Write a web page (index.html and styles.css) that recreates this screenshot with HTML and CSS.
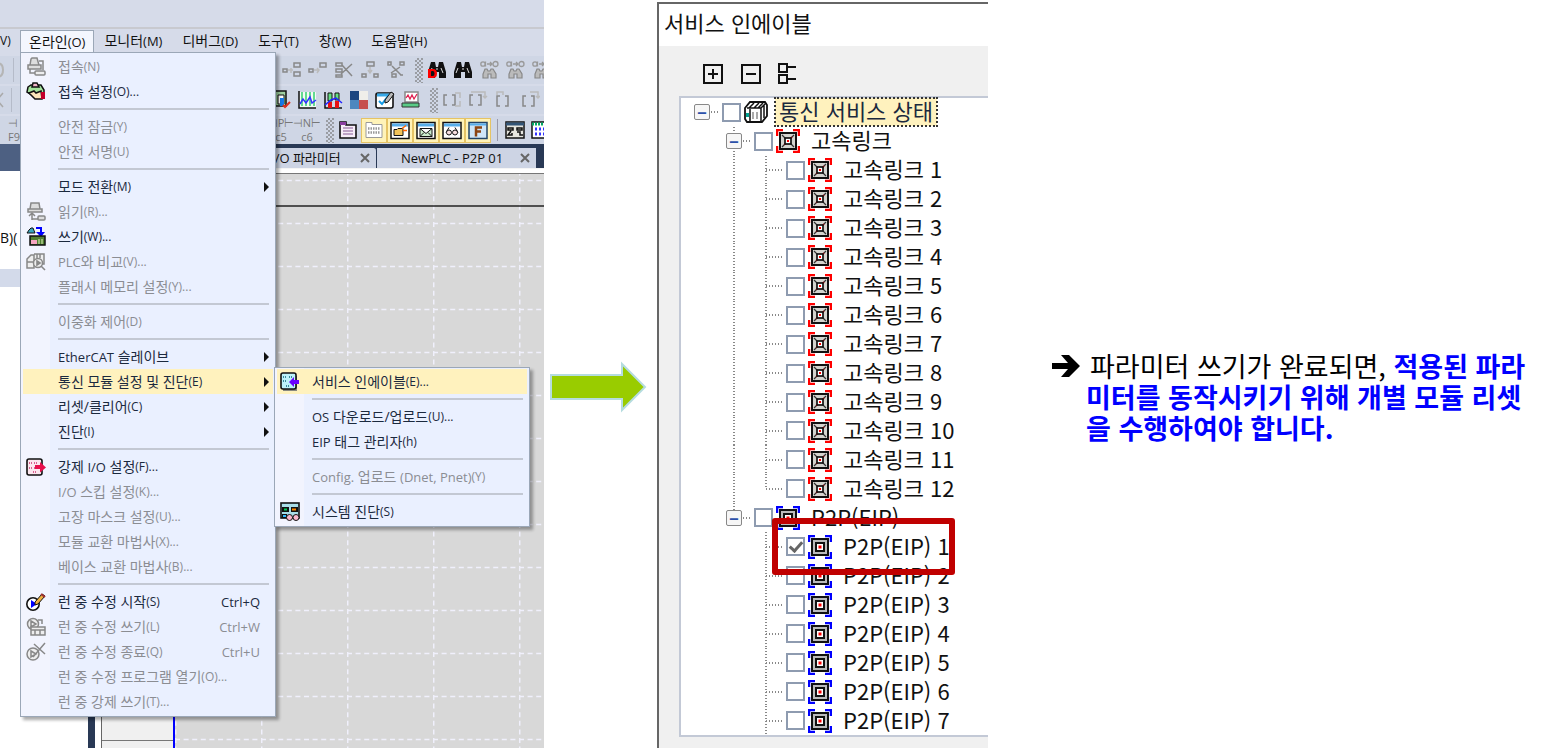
FILE: index.html
```html
<!DOCTYPE html>
<html lang="ko">
<head>
<meta charset="utf-8">
<title>서비스 인에이블</title>
<link rel="stylesheet" href="styles.css">
</head>
<body>
<svg class="sprite" aria-hidden="true">
  <symbol id="link" viewBox="0 0 24 24"><path d="M1 7V1h6M17 1h6v6M23 17v6h-6M7 23H1v-6" fill="none" stroke="#f00" stroke-width="2.5"/><rect x="4" y="4" width="16" height="16" fill="#d4d4cf" stroke="#111" stroke-width="2"/><path d="M6 6l12 12M18 6L6 18" stroke="#333" stroke-width="1.2"/><path d="M16 8l-8 8" stroke="#f00" stroke-width="1.5" stroke-dasharray="2 7"/><rect x="9" y="9" width="6" height="6" fill="#fff" stroke="#111" stroke-width="1.7"/><rect x="11" y="11" width="2" height="2" fill="#f00"/></symbol>
  <symbol id="p2p" viewBox="0 0 24 24"><path d="M1 7V1h6M17 1h6v6M23 17v6h-6M7 23H1v-6" fill="none" stroke="#00f" stroke-width="2.5"/><rect x="4" y="4" width="16" height="16" fill="#bbb" stroke="#111" stroke-width="2"/><rect x="8" y="8" width="8" height="8" fill="#fff" stroke="#111" stroke-width="2"/><rect x="10.500" y="10.500" width="3" height="3" fill="#f00"/></symbol>
  <symbol id="rack" viewBox="0 0 24 24"><path d="M1 8l5-6h15l2 3v11l-5 6H3l-2-3z" fill="#fff" stroke="#111" stroke-width="1.800"/><path d="M3 8h14v13M17 8l5-5M5 8l5-5M10 8l5-5M14 8l5-5M6 9v12M20 5v13" fill="none" stroke="#111" stroke-width="1.500"/><path d="M9 12v7M13 12v7" stroke="#aaa" stroke-width="2"/><path d="M2 13h3v4H2z" fill="#00a090"/></symbol>
  <symbol id="plug" viewBox="0 0 20 20"><path d="M5 2l1-1h5l2 7H4zM2 8h13v4H2z" fill="#ddd" stroke="#888" stroke-width="1.500"/><path d="M4 12v4h5M13 4h4v9" fill="none" stroke="#888" stroke-width="1.500"/><rect x="9" y="14" width="10" height="4" rx="1" fill="#eee" stroke="#888" stroke-width="1.500"/></symbol>
  <symbol id="setup" viewBox="0 0 20 20"><path d="M2 5l3-2h10l3 5v6H8L1 10z" fill="#a5e49c" stroke="#111" stroke-width="1.500"/><path d="M6 5l1-4h4l2 4z" fill="#f5b5cb" stroke="#111" stroke-width="1.500"/><path d="M3 11l5-2 2 2 5-2 1 8H9z" fill="#fde6bc" stroke="#111" stroke-width="1.500"/><path d="M15 10h4v7h-4z" fill="#c4002a"/></symbol>
  <symbol id="read" viewBox="0 0 20 20"><path d="M5 1h8l1 6H4zM2 7h14v3H2z" fill="#ddd" stroke="#888" stroke-width="1.500"/><path d="M6 18v-6M3 14l3-3 3 3M6 17h6" fill="none" stroke="#888" stroke-width="1.500"/><rect x="12" y="14" width="7" height="4" rx="1" fill="#ddd" stroke="#888" stroke-width="1.500"/></symbol>
  <symbol id="write" viewBox="0 0 20 20"><path d="M3 3l2-2h2l2 5H1z" fill="#38a8c0" stroke="#111"/><path d="M10 1h5v6" fill="none" stroke="#00f" stroke-width="2"/><path d="M10 5h9l-4 5z" fill="#00f"/><path d="M4 9h15v9H4z" fill="#518032" stroke="#111" stroke-width="1.500"/><path d="M5 13h6v4H5z" fill="#f6a5c0"/><path d="M13 12v5M16 12v5" stroke="#e5f6ba"/></symbol>
  <symbol id="compare" viewBox="0 0 20 20"><path d="M1 7l4-4h3v13H1zM8 2h10v10H8M11 2v4M14 2v4M1 10h6" fill="#eee" stroke="#888" stroke-width="1.500"/><circle cx="12" cy="11" r="4.500" fill="#eee" stroke="#888" stroke-width="1.500"/><path d="M11 9l3 2-3 2zM15 14l4 4" fill="#888" stroke="#888" stroke-width="1.600"/></symbol>
  <symbol id="force" viewBox="0 0 20 20"><rect x="1" y="2" width="15" height="16" rx="2" fill="#fce6ee" stroke="#111" stroke-width="1.600"/><path d="M3 6h3m2 0h3M3 11h3m2 0h2M7 15h3" stroke="#d86090" stroke-width="2" stroke-dasharray="1 1"/><path d="M9 8h5V5l6 5.500-6 5V12H9z" fill="#e8104c"/></symbol>
  <symbol id="edit" viewBox="0 0 20 20"><circle cx="7" cy="12" r="6.200" fill="#fff" stroke="#111" stroke-width="1.600"/><path d="M5 8l6 4-6 4z" fill="#00f"/><path d="M9 10l7-8 3 2-7 8-3 1z" fill="#f0b040" stroke="#111"/><path d="M15 2l4 3" stroke="#a03030" stroke-width="2"/></symbol>
  <symbol id="editwrite" viewBox="0 0 20 20"><circle cx="7" cy="7" r="5.500" fill="#eee" stroke="#888" stroke-width="1.500"/><path d="M5 4l5 3-5 3zM12 3h4v4" fill="none" stroke="#888" stroke-width="1.500"/><path d="M5 10h14v8H5zM5 13h14M9 13v5M14 13v5" fill="#eee" stroke="#888" stroke-width="1.500"/></symbol>
  <symbol id="editend" viewBox="0 0 20 20"><circle cx="7" cy="12" r="6" fill="#eee" stroke="#888" stroke-width="1.500"/><path d="M5 9l5 3-5 3zM8 2l11 10M19 1L7 15" fill="none" stroke="#888" stroke-width="1.500"/></symbol>
  <symbol id="enable" viewBox="0 0 20 20"><path d="M3 4h14v15H3z" fill="#8a8a80"/><rect x="1" y="1" width="15" height="16" rx="2" fill="#bdf2fa" stroke="#111" stroke-width="1.600"/><path d="M3 5h4m2 0h4M3 9h4M6 14h4" stroke="#3a8a9a" stroke-width="2" stroke-dasharray="1 1"/><path d="M9 10l5-5v3h5v4h-5v3z" fill="#6a00ff"/></symbol>
  <symbol id="diag" viewBox="0 0 20 20"><rect x="1" y="1" width="18" height="15" fill="#a9dde8" stroke="#111" stroke-width="1.600"/><path d="M2 5h7v5H2zM11 5h7v5h-7zM2 12h5v4H2z" fill="#111"/><path d="M4 7.500h3" stroke="#0c5" stroke-width="2"/><path d="M12 7.500h4" stroke="#f80" stroke-width="2"/><path d="M3 14h3" stroke="#3bf" stroke-width="2"/><circle cx="9.500" cy="15.500" r="3" fill="#fbb8cd" stroke="#111"/><circle cx="16" cy="15.500" r="3" fill="#fbb8cd" stroke="#111"/></symbol>
  <symbol id="net1" viewBox="0 0 20 20"><path d="M1 9h4v3H1zM12 3h6v4h-6zM12 12h6v4h-6z" fill="none" stroke="#888" stroke-width="1.500"/><path d="M6 10h5M9 8v5" stroke="#bbb" stroke-width="1.500"/></symbol>
  <symbol id="net2" viewBox="0 0 20 20"><path d="M1 9h4v3H1zM12 3h6v4h-6z" fill="none" stroke="#888" stroke-width="1.500"/><path d="M6 10h5M9 8l2 2-2 3" fill="none" stroke="#bbb" stroke-width="1.500"/></symbol>
  <symbol id="net3" viewBox="0 0 20 20"><path d="M2 3h6v3H2zM2 9h6v3H2zM2 15h6v2H2zM18 4L7 14M8 5l10 11" fill="none" stroke="#888" stroke-width="1.500"/></symbol>
  <symbol id="net4" viewBox="0 0 20 20"><path d="M7 2h7v4H7zM2 14h4v3H2zM14 14h4v3h-4z" fill="none" stroke="#888" stroke-width="1.500"/><path d="M10 7v6M8 10l2 3 2-3" fill="none" stroke="#bbb" stroke-width="1.500"/></symbol>
  <symbol id="net5" viewBox="0 0 20 20"><path d="M2 2h3v3H2zM14 2h4v3h-4zM6 14h4v3H6zM6 6l9 9M14 7L5 13M14 15h3" fill="none" stroke="#888" stroke-width="1.500"/></symbol>
  <symbol id="bino" viewBox="0 0 20 20"><path d="M4 2h4l1 5h2l1-5h4l3 10v6h-7v-6H8v6H1v-6z" fill="#111"/><path d="M5 8l-2 5M14 8l2 5M9 9h2" stroke="#ddd"/></symbol>
  <symbol id="bino-d" viewBox="0 0 20 20"><use href="#bino"/><path d="M1 9h5q4 0 4 4.500T6 18H1zM4 11v5h2q1.500 0 1.500-2.500T6 11z" fill="#f00" fill-rule="evenodd"/></symbol>
  <symbol id="bino-g" viewBox="0 0 20 20"><g fill="none" stroke="#999" stroke-width="1.300"><circle cx="4" cy="4" r="2.200"/><path d="M6.500 1.500v5"/><circle cx="16.500" cy="4" r="2.500"/><path d="M8 4h5M11 2l2 2-2 2"/></g><path d="M6 9h2l1 2h2l1-2h2l3 5v4h-5v-4H9v4H4v-4z" fill="#bbb" stroke="#888" stroke-width="1.200"/></symbol>
  <symbol id="door" viewBox="0 0 20 20"><path d="M2 3l3-2h10v15H5l-3 2z" fill="#9fd0a0" stroke="#111" stroke-width="1.500"/><path d="M7 5h6v9H7z" fill="#fff" stroke="#111"/><path d="M9 8h4v8H9z" fill="#1678e8"/><path d="M12 15l2 2 5-5" fill="none" stroke="#e03020" stroke-width="2"/></symbol>
  <symbol id="trend" viewBox="0 0 20 20"><path d="M2 2h17v16H2z" fill="#f2fbf4"/><path d="M2 1v17h17" fill="none" stroke="#111" stroke-width="1.500"/><path d="M5 2v14M9 2v14M13 2v14M17 2v14" stroke="#35d070" stroke-width="1.500"/><path d="M3 14l3-5 3 4 4-6 2 6 4-3" fill="none" stroke="#33f" stroke-width="1.500"/></symbol>
  <symbol id="bars" viewBox="0 0 20 20"><path d="M2 2v16h17" fill="none" stroke="#111" stroke-width="1.500"/><path d="M5 3h4v8H5zM12 3h4v7h-4z" fill="#65df80" stroke="#111"/><path d="M5 12h4v6H5zM12 11h4v7h-4z" fill="#e81010"/><path d="M2 15l6-5 5-2 6 5" fill="none" stroke="#22f" stroke-width="1.500"/></symbol>
  <symbol id="quad" viewBox="0 0 20 20"><path d="M1 1h9v9H1z" fill="#1c4680"/><path d="M10 1h9v9h-9z" fill="#efeeea"/><path d="M1 10h9v9H1z" fill="#4d87bf"/><path d="M10 10h9v9h-9z" fill="#c64e4d"/></symbol>
  <symbol id="memo" viewBox="0 0 20 20"><rect x="1" y="3" width="17" height="15" rx="2" fill="#fff" stroke="#111" stroke-width="1.600"/><path d="M2 5h14" stroke="#36a8e8" stroke-width="3"/><path d="M4 11l3 3 6-8" fill="none" stroke="#149be6" stroke-width="2"/><path d="M10 10l6-8 3 2-6 8-3 1z" fill="#bbb" stroke="#111"/></symbol>
  <symbol id="monitor" viewBox="0 0 20 20"><path d="M4 2h13v10H4z" fill="#fff" stroke="#888" stroke-width="1.500"/><path d="M5 8l2-3 2 4 2-4 2 4 3-5" fill="none" stroke="#e02050" stroke-width="1.300"/><path d="M1 13h17v4H1z" fill="#59cb86" stroke="#333"/></symbol>
  <symbol id="brk1" viewBox="0 0 20 20"><path d="M5 5H2v10h3M10 5h3v10h-3" fill="none" stroke="#888" stroke-width="1.500"/><path d="M13 3h5v5M13 16h5v-5" fill="none" stroke="#bbb" stroke-width="1.500"/></symbol>
  <symbol id="brk2" viewBox="0 0 20 20"><path d="M5 5H2v10h3M10 5h3v10h-3" fill="none" stroke="#888" stroke-width="1.500"/><path d="M3 2h14v6M15 6l2 2 2-2" fill="none" stroke="#bbb" stroke-width="1.500"/></symbol>
  <symbol id="brk3" viewBox="0 0 20 20"><path d="M6 6H3v10h3M11 6h3v10h-3" fill="none" stroke="#888" stroke-width="1.500"/><path d="M3 5V2h6v3" fill="none" stroke="#bbb" stroke-width="1.500"/></symbol>
  <symbol id="brk4" viewBox="0 0 20 20"><path d="M6 6H3v10h3M11 6h3v10h-3" fill="none" stroke="#888" stroke-width="1.500"/><path d="M10 2h8v6M16 6l2 2 2-2" fill="none" stroke="#bbb" stroke-width="1.500"/></symbol>
  <symbol id="note" viewBox="0 0 20 20"><path d="M2 2h6v3h10v13H2z" fill="#f7eef8" stroke="#111" stroke-width="1.600"/><path d="M2 2h6v3H2z" fill="#8a3fa0"/><path d="M5 8h10M5 11h10M5 14h10" stroke="#875a95"/></symbol>
  <symbol id="cells" viewBox="0 0 20 20"><path d="M2 2h6v2h10v13H2z" fill="#fff" stroke="#999"/><path d="M4 8h12M4 12h12" stroke="#999" stroke-width="2.500" stroke-dasharray="1.500 1"/></symbol>
  <symbol id="folder" viewBox="0 0 20 20"><rect x="1" y="2" width="18" height="16" fill="#fff" stroke="#111" stroke-width="1.500"/><path d="M2 3h16v3H2z" fill="#57aeea"/><path d="M4 9h3l1-1h5v7H4z" fill="#f2c35a" stroke="#111"/><path d="M12 8l4-3M13 10h4" stroke="#f60" stroke-width="1.500"/></symbol>
  <symbol id="mail" viewBox="0 0 20 20"><rect x="1" y="2" width="18" height="16" fill="#fff" stroke="#111" stroke-width="1.500"/><path d="M2 3h16v3H2z" fill="#57aeea"/><path d="M4 8h12v8H4zM4 8l6 5 6-5M4 16l4-4M16 16l-4-4" fill="#ccebcd" stroke="#111"/></symbol>
  <symbol id="glasses" viewBox="0 0 20 20"><rect x="1" y="2" width="18" height="16" fill="#fff" stroke="#111" stroke-width="1.500"/><path d="M2 3h16v3H2z" fill="#57aeea"/><path d="M4 12l3-5M16 12l-3-5" stroke="#111"/><circle cx="7" cy="12" r="2.500" fill="#f8dfdf" stroke="#111"/><circle cx="13" cy="12" r="2.500" fill="#f8dfdf" stroke="#111"/></symbol>
  <symbol id="eff" viewBox="0 0 20 20"><rect x="1" y="2" width="18" height="16" fill="#cfe6f8" stroke="#246" stroke-width="1.500"/><path d="M2 3h16v2H2z" fill="#57aeea"/><path d="M8 16V7h6M8 11h5" fill="none" stroke="#8b4513" stroke-width="2.500"/></symbol>
  <symbol id="win" viewBox="0 0 20 20"><rect x="1" y="2" width="18" height="16" fill="#e6e6df" stroke="#111" stroke-width="1.500"/><path d="M1 4h18" stroke="#357" stroke-width="3"/><path d="M3 8h5v2H3zM12 8h5v2h-5zM6 11l-3 4h4v-2M12 12h3v3h3" fill="none" stroke="#111" stroke-width="1.500"/></symbol>
  <symbol id="grid" viewBox="0 0 20 20"><rect x="1" y="2" width="18" height="16" fill="#fff" stroke="#111" stroke-width="1.500"/><path d="M1 4h18" stroke="#0a6" stroke-width="3" stroke-dasharray="2 1"/><path d="M4 9h12M4 14h12" stroke="#33f" stroke-width="3" stroke-dasharray="2 2"/></symbol>
</svg>

<main class="page">
  <section class="ide">
    <div class="titlebar"></div>
    <nav class="menubar">
      <button class="clip">V)</button>
      <button class="open">온라인<span class="key">(O)</span></button>
      <button>모니터<span class="key">(M)</span></button>
      <button>디버그<span class="key">(D)</span></button>
      <button>도구<span class="key">(T)</span></button>
      <button>창<span class="key">(W)</span></button>
      <button>도움말<span class="key">(H)</span></button>
    </nav>
    <div class="toolbar">
      <span class="lead"><svg class="edge" viewBox="0 0 20 28"><path d="M-3 7q6 0 6 7t-6 7" fill="none" stroke="#b5b5b5" stroke-width="2"/><path d="M13.500 2v24" stroke="#b5bbc9"/></svg></span><span class="slot"></span>
      <svg><use href="#net1"/></svg><svg><use href="#net2"/></svg><svg><use href="#net3"/></svg><svg><use href="#net4"/></svg><svg><use href="#net5"/></svg>
      <i class="grip"></i>
      <svg><use href="#bino-d"/></svg><svg><use href="#bino"/></svg><svg><use href="#bino-g"/></svg><svg><use href="#bino-g"/></svg><svg><use href="#bino-g"/></svg>
    </div>
    <div class="toolbar">
      <span class="lead"><svg class="edge" viewBox="0 0 20 28"><path d="M3 7l-6 7 6 7" fill="none" stroke="#aaa" stroke-width="1.500"/><path d="M11.500 2v24" stroke="#b5bbc9"/></svg></span>
      <svg><use href="#door"/></svg><svg><use href="#trend"/></svg><svg><use href="#bars"/></svg><svg><use href="#quad"/></svg><svg><use href="#memo"/></svg><svg><use href="#monitor"/></svg>
      <i class="grip"></i>
      <svg><use href="#brk1"/></svg><svg><use href="#brk2"/></svg><svg><use href="#brk3"/></svg><svg><use href="#brk4"/></svg>
    </div>
    <div class="toolbar">
      <span class="lead"><span class="fkey"><span>⊣</span><span>F9</span></span></span>
      <span class="fn"><span>⊣P⊢</span><span>c5</span></span><span class="fn"><span>⊣N⊢</span><span>c6</span></span>
      <i class="grip"></i>
      <svg><use href="#note"/></svg><svg class="on"><use href="#cells"/></svg><svg class="on"><use href="#folder"/></svg><svg class="on"><use href="#mail"/></svg><svg class="on"><use href="#glasses"/></svg><svg class="on"><use href="#eff"/></svg>
      <i class="bar"></i>
      <svg><use href="#win"/></svg><svg><use href="#grid"/></svg>
    </div>
    <div class="work">
      <aside class="side">
        <div class="side-head"></div>
        <p class="side-text">B)(</p>
        <div class="side-band"></div>
      </aside>
      <div class="editor">
        <div class="tabs">
          <div class="tab first"><span>I/O 파라미터</span><button class="close" aria-label="닫기"><svg viewBox="0 0 10 10"><path d="M1 1l8 8M9 1L1 9"/></svg></button></div>
          <div class="tab"><span>NewPLC - P2P 01</span><button class="close" aria-label="닫기"><svg viewBox="0 0 10 10"><path d="M1 1l8 8M9 1L1 9"/></svg></button></div>
        </div>
        <div class="sheet">
          <div class="gutter"></div>
          <svg class="canvas"><defs><pattern id="cell" x="0" y="5" width="86" height="43" patternUnits="userSpaceOnUse"><path d="M0 1.500H86" stroke="#f0f0fc" stroke-width="1.500" stroke-dasharray="5 3.600"/><path d="M.7 0V43" stroke="#f0f0fc" stroke-width="1.500" stroke-dasharray="5 3.600"/></pattern></defs><rect width="100%" height="100%" fill="#d8d8d8"/><rect width="100%" height="100%" fill="url(#cell)"/><path d="M0 32h900" stroke="#222" stroke-width="1.500"/></svg>
        </div>
      </div>
    </div>

    <ul class="menu main-menu">
      <li><button disabled><svg><use href="#plug"/></svg>접속<span class="key">(N)</span></button></li>
      <li><button><svg><use href="#setup"/></svg>접속 설정<span class="key">(O)...</span></button></li>
      <li class="rule"></li>
      <li><button disabled><i></i>안전 잠금<span class="key">(Y)</span></button></li>
      <li><button disabled><i></i>안전 서명<span class="key">(U)</span></button></li>
      <li class="rule"></li>
      <li><button class="more"><i></i>모드 전환<span class="key">(M)</span></button></li>
      <li><button disabled><svg><use href="#read"/></svg>읽기<span class="key">(R)...</span></button></li>
      <li><button><svg><use href="#write"/></svg>쓰기<span class="key">(W)...</span></button></li>
      <li><button disabled><svg><use href="#compare"/></svg><span class="lat">PLC</span>와 비교<span class="key">(V)...</span></button></li>
      <li><button disabled><i></i>플래시 메모리 설정<span class="key">(Y)...</span></button></li>
      <li class="rule"></li>
      <li><button disabled><i></i>이중화 제어<span class="key">(D)</span></button></li>
      <li class="rule"></li>
      <li><button class="more"><i></i><span class="lat">EtherCAT</span> 슬레이브</button></li>
      <li class="parent"><button class="more hot"><i></i>통신 모듈 설정 및 진단<span class="key">(E)</span></button>
        <ul class="menu sub-menu">
          <li><button class="hot"><svg><use href="#enable"/></svg>서비스 인에이블<span class="key">(E)...</span></button></li>
          <li class="rule"></li>
          <li><button><i></i><span class="lat">OS</span> 다운로드/업로드<span class="key">(U)...</span></button></li>
          <li><button><i></i><span class="lat">EIP</span> 태그 관리자<span class="key">(h)</span></button></li>
          <li class="rule"></li>
          <li><button disabled><i></i><span class="lat">Config.</span> 업로드 <span class="lat">(Dnet, Pnet)</span><span class="key">(Y)</span></button></li>
          <li class="rule"></li>
          <li><button><svg><use href="#diag"/></svg>시스템 진단<span class="key">(S)</span></button></li>
        </ul>
      </li>
      <li><button class="more"><i></i>리셋/클리어<span class="key">(C)</span></button></li>
      <li><button class="more"><i></i>진단<span class="key">(I)</span></button></li>
      <li class="rule"></li>
      <li><button><svg><use href="#force"/></svg>강제 <span class="lat">I/O</span> 설정<span class="key">(F)...</span></button></li>
      <li><button disabled><i></i><span class="lat">I/O</span> 스킵 설정<span class="key">(K)...</span></button></li>
      <li><button disabled><i></i>고장 마스크 설정<span class="key">(U)...</span></button></li>
      <li><button disabled><i></i>모듈 교환 마법사<span class="key">(X)...</span></button></li>
      <li><button disabled><i></i>베이스 교환 마법사<span class="key">(B)...</span></button></li>
      <li class="rule"></li>
      <li><button><svg><use href="#edit"/></svg>런 중 수정 시작<span class="key">(S)</span><kbd>Ctrl+Q</kbd></button></li>
      <li><button disabled><svg><use href="#editwrite"/></svg>런 중 수정 쓰기<span class="key">(L)</span><kbd>Ctrl+W</kbd></button></li>
      <li><button disabled><svg><use href="#editend"/></svg>런 중 수정 종료<span class="key">(Q)</span><kbd>Ctrl+U</kbd></button></li>
      <li><button disabled><i></i>런 중 수정 프로그램 열기<span class="key">(O)...</span></button></li>
      <li><button disabled><i></i>런 중 강제 쓰기<span class="key">(T)...</span></button></li>
    </ul>
  </section>

  <div class="flow">
    <svg viewBox="0 0 98 52" width="98" height="52" aria-hidden="true"><path d="M2 14h71V3l23 23-23 23V38H2z" fill="#9c0" stroke="#b5dcdf" stroke-width="2"/></svg>
  </div>

  <section class="dialog">
    <h1>서비스 인에이블</h1>
    <div class="tools">
      <button aria-label="모두 펼치기"><svg viewBox="0 0 22 22"><path d="M2 2h18v18H2zM11 6v10M6 11h10"/></svg></button>
      <button aria-label="모두 접기"><svg viewBox="0 0 22 22"><path d="M2 2h18v18H2zM6 11h10"/></svg></button>
      <button aria-label="트리 보기"><svg viewBox="0 0 22 22"><path d="M1 1h8v8H1zM1 12h8v8H1zM9 4h9M9 16h9"/></svg></button>
    </div>
    <div class="tree">
      <div class="row root"><span class="node"><button>−</button></span><label><input type="checkbox"><svg><use href="#rack"/></svg><span>통신 서비스 상태</span></label></div>
      <div class="row"><i class="gap"></i><span class="node mid"><button>−</button></span><label><input type="checkbox"><svg><use href="#link"/></svg><span>고속링크</span></label></div>
      <div class="row"><i class="gap"></i><i class="gap line"></i><span class="node mid"></span><label><input type="checkbox"><svg><use href="#link"/></svg><span>고속링크 1</span></label></div>
      <div class="row"><i class="gap"></i><i class="gap line"></i><span class="node mid"></span><label><input type="checkbox"><svg><use href="#link"/></svg><span>고속링크 2</span></label></div>
      <div class="row"><i class="gap"></i><i class="gap line"></i><span class="node mid"></span><label><input type="checkbox"><svg><use href="#link"/></svg><span>고속링크 3</span></label></div>
      <div class="row"><i class="gap"></i><i class="gap line"></i><span class="node mid"></span><label><input type="checkbox"><svg><use href="#link"/></svg><span>고속링크 4</span></label></div>
      <div class="row"><i class="gap"></i><i class="gap line"></i><span class="node mid"></span><label><input type="checkbox"><svg><use href="#link"/></svg><span>고속링크 5</span></label></div>
      <div class="row"><i class="gap"></i><i class="gap line"></i><span class="node mid"></span><label><input type="checkbox"><svg><use href="#link"/></svg><span>고속링크 6</span></label></div>
      <div class="row"><i class="gap"></i><i class="gap line"></i><span class="node mid"></span><label><input type="checkbox"><svg><use href="#link"/></svg><span>고속링크 7</span></label></div>
      <div class="row"><i class="gap"></i><i class="gap line"></i><span class="node mid"></span><label><input type="checkbox"><svg><use href="#link"/></svg><span>고속링크 8</span></label></div>
      <div class="row"><i class="gap"></i><i class="gap line"></i><span class="node mid"></span><label><input type="checkbox"><svg><use href="#link"/></svg><span>고속링크 9</span></label></div>
      <div class="row"><i class="gap"></i><i class="gap line"></i><span class="node mid"></span><label><input type="checkbox"><svg><use href="#link"/></svg><span>고속링크 10</span></label></div>
      <div class="row"><i class="gap"></i><i class="gap line"></i><span class="node mid"></span><label><input type="checkbox"><svg><use href="#link"/></svg><span>고속링크 11</span></label></div>
      <div class="row"><i class="gap"></i><i class="gap line"></i><span class="node end"></span><label><input type="checkbox"><svg><use href="#link"/></svg><span>고속링크 12</span></label></div>
      <div class="row"><i class="gap"></i><span class="node end"><button>−</button></span><label><input type="checkbox"><svg><use href="#p2p"/></svg><span>P2P(EIP)</span></label></div>
      <div class="row marked"><i class="gap"></i><i class="gap"></i><span class="node mid"></span><label><input type="checkbox" checked><svg><use href="#p2p"/></svg><span>P2P(EIP) 1</span></label></div>
      <div class="row"><i class="gap"></i><i class="gap"></i><span class="node mid"></span><label><input type="checkbox"><svg><use href="#p2p"/></svg><span>P2P(EIP) 2</span></label></div>
      <div class="row"><i class="gap"></i><i class="gap"></i><span class="node mid"></span><label><input type="checkbox"><svg><use href="#p2p"/></svg><span>P2P(EIP) 3</span></label></div>
      <div class="row"><i class="gap"></i><i class="gap"></i><span class="node mid"></span><label><input type="checkbox"><svg><use href="#p2p"/></svg><span>P2P(EIP) 4</span></label></div>
      <div class="row"><i class="gap"></i><i class="gap"></i><span class="node mid"></span><label><input type="checkbox"><svg><use href="#p2p"/></svg><span>P2P(EIP) 5</span></label></div>
      <div class="row"><i class="gap"></i><i class="gap"></i><span class="node mid"></span><label><input type="checkbox"><svg><use href="#p2p"/></svg><span>P2P(EIP) 6</span></label></div>
      <div class="row"><i class="gap"></i><i class="gap"></i><span class="node mid"></span><label><input type="checkbox"><svg><use href="#p2p"/></svg><span>P2P(EIP) 7</span></label></div>
    </div>
  </section>

  <section class="note">
    <svg viewBox="0 0 28 24" width="28" height="24" aria-hidden="true"><path d="M0 9h16L9 1h8l11 11-11 11H9l7-8H0z"/></svg>
    <p>파라미터 쓰기가 완료되면, <strong>적용된 파라<br>미터를 동작시키기 위해 개별 모듈 리셋<br>을 수행하여야 합니다.</strong></p>
  </section>
</main>
</body>
</html>
```
FILE: styles.css
```css
*, ::before, ::after { box-sizing: border-box; }
body { margin: 0; background: #fff; color: #111; font-family: "Noto Sans CJK KR", sans-serif; }
button { margin: 0; padding: 0; border: 0; background: none; font: inherit; color: inherit; white-space: nowrap; }
ul { margin: 0; padding: 0; list-style: none; }
.sprite { display: none; }

.page { display: grid; grid-template-columns: 544fr 113fr 331fr 575fr; min-height: 100vh; overflow: hidden; }

/* IDE window */
.ide { position: relative; display: flex; flex-direction: column; min-width: 0; overflow: hidden; background: #d6dbe9; font-family: "Open Sans", "Noto Sans CJK KR", sans-serif; font-size: 14px; }
.titlebar { height: 29px; border-bottom: 2px solid #c8c9cf; }
.menubar { display: flex; height: 25px; padding-top: 1px; }
.menubar button { height: 22px; padding: 0 10px; line-height: 20px; flex: none; }
.menubar .clip { width: 20px; padding: 0; text-align: left; font-size: 12px; overflow: hidden; }
.menubar .open { padding: 0 8px; background: #f3f6fe; border: 1px solid #9ba7b7; border-bottom: 0; line-height: 19px; }
.key { font-size: 12px; }
.menubar .key { font-size: 13px; }
.lat { font-size: 13px; }

.toolbar { display: flex; align-items: center; height: 30px; border-top: 2px solid #d6dbe9; background: #cfd6e5; overflow: hidden; }
.toolbar svg { flex: none; width: 26px; height: 24px; padding: 2px 3px; }
.toolbar .lead { flex: none; display: flex; width: 268px; }
.toolbar .edge { width: 20px; height: 28px; padding: 0; }
.toolbar .slot { flex: none; width: 11px; }
.fkey, .fn { display: flex; flex-direction: column; flex: none; font-size: 11px; line-height: 14px; color: #777; }
.fkey { padding-left: 8px; }
.fn { width: 26px; align-items: center; }
.toolbar .on { height: 25px; background: #fff3b8; border: 1px solid #e5c365; padding: 1px 2px; }
.grip { flex: none; width: 8px; height: 25px; margin: 0 1px 0 6px; background: conic-gradient(#777 25%, transparent 0 50%, #777 0 75%, transparent 0) 0 0 / 4px 4px; opacity: .6; }
.bar { flex: none; width: 1px; height: 22px; margin: 0 4px 0 6px; background: #99a; }

.work { display: flex; flex: 1; min-height: 0; }
.side { flex: none; width: 88px; background: #fff; }
.side-head { height: 27px; background: #4d6082; }
.side-text { margin: 0; padding-top: 57px; height: 98px; font-size: 14px; line-height: 20px; }
.side-band { height: 18px; background: #d3daea; }
.editor { display: flex; flex-direction: column; flex: 1; min-width: 0; border-left: 7px solid #293955; background: #293955; }
.tabs { display: flex; height: 25px; padding-top: 4px; border-bottom: 1px solid #f5f5f5; }
.tab { display: flex; align-items: center; justify-content: space-between; width: 159px; padding: 0 5px 0 24px; background: #cdd4e4; line-height: 20px; font-size: 13px; }
.tab.first { width: 282px; padding-left: 176px; border-right: 1px solid #293955; border-radius: 0 3px 0 0; }
.close { display: flex; width: 11px; }
.close svg { width: 10px; height: 10px; stroke: #666; stroke-width: 2; }
.sheet { display: flex; flex: 1; border-top: 4px solid #fff; background: #fff; }
.gutter { flex: none; width: 74px; margin-left: 6px; background: linear-gradient(#777, #777) 0 calc(100% - 7px) / 100% 1px no-repeat #f0f0f0; border-left: 1px solid #666; border-right: 2px solid #00f; }
.canvas { flex: 1; min-width: 0; height: 100%; border-top: 1px solid #777; }

.menu { position: absolute; width: 256px; padding: 1px 2px 2px; border: 1px solid #9ba7b7; background: linear-gradient(90deg, #f2f4fe 29px, #eaf0ff 29px); box-shadow: 3px 3px 3px #0005; color: #1b293e; }
.main-menu { left: 20px; top: 52px; }
.sub-menu { left: 251px; top: -2px; }
.parent { position: relative; }
.menu button { display: flex; align-items: center; width: 100%; height: 25px; padding: 0 8px 0 3px; text-align: left; white-space: pre; line-height: 20px; }
.menu button:disabled { color: #8b8d93; }
.menu svg { flex: none; width: 20px; height: 20px; margin-right: 12px; }
.menu i { flex: none; width: 32px; }
.menu .hot { background: #fff2be; }
.menu .more::after { content: ""; margin-left: auto; margin-right: -4px; border: 5px solid transparent; border-left-color: #111; border-right: 0; }
.menu kbd { margin-left: auto; padding-right: 5px; font: 13px "Open Sans", sans-serif; }
.rule { height: 10px; margin: 0 4px 0 35px; border-top: 4px solid transparent; border-bottom: 4px solid transparent; background: #c3c8d3; background-clip: padding-box; }

/* Arrow between the two windows */
.flow { display: flex; justify-content: center; padding: 361px 5px 0 0; }

/* Dialog */
.dialog { display: flex; flex-direction: column; min-width: 0; margin-top: 2px; border: 2px solid #666; border-width: 2px 0 0 2px; background: #f0f0f0; overflow: hidden; }
.dialog h1 { margin: 0; padding-left: 5px; height: 42px; background: #fff; font-size: 22px; font-weight: 400; line-height: 36px; }
.tools { display: flex; gap: 16px; padding: 17px 0 0 43px; height: 50px; }
.tools button { width: 22px; height: 22px; }
.tools svg { width: 22px; height: 22px; fill: none; stroke: #111; stroke-width: 2; }
.tree { flex: 1; display: grid; grid-auto-rows: 1fr; margin: 0 0 11px 20px; padding-left: 5px; border: 2px solid #c3c9d6; border-right: 0; background: #fff; font-size: 22px; line-height: 28px; }
.row { position: relative; display: flex; min-height: 0; height: 100%; }
.row label { display: flex; align-items: center; height: 100%; white-space: nowrap; }
.row svg { width: 24px; height: 24px; margin: 0 11px 0 3px; }
.row label span { line-height: 24px; padding-bottom: 4px; }
.gap { flex: none; width: 32px; }
.line { background: repeating-linear-gradient(#888 0 1px, transparent 1px 3px) 15px 0 / 2px 100% no-repeat; }
.node { flex: none; display: flex; align-items: center; width: 36px; padding-left: 8px; --h: repeating-linear-gradient(90deg, #888 0 1px, transparent 1px 3px) 16px 50% / 18px 2px no-repeat; --v: repeating-linear-gradient(#888 0 1px, transparent 1px 3px) 15px 0; background: var(--h); }
.mid { background: var(--h), var(--v) / 2px 100% no-repeat; }
.end { background: var(--h), var(--v) / 2px 50% no-repeat; }
.node button { width: 16px; height: 16px; border: 1px solid #888; border-radius: 2px; background: #f6f6f6; color: #2b50a8; font-size: 16px; line-height: 12px; font-weight: 700; }
.row input { appearance: none; flex: none; display: grid; place-items: center; width: 19px; height: 19px; margin: 0; border: 2px solid #8e9bb0; background: #fff; }
.row input:checked::before { content: ""; width: 8px; height: 13px; margin-bottom: 4px; border: solid #666; border-width: 0 3px 3px 0; transform: rotate(42deg); }
.root label span { margin-left: -4px; padding: 0 4px 4px; background: #fff2be; outline: 2px dotted #333; outline-offset: -1px; color: #1b293e; }
.marked::after { content: ""; position: absolute; z-index: 1; left: 86px; width: 183px; top: -14px; bottom: -14px; border: 6px solid #c00000; border-radius: 3px; }

/* Explanation */
.note { display: flex; align-items: flex-start; padding: 350px 0 0 64px; color: #000; }
.note svg { flex: none; margin-top: 4px; }
.note p { margin: 0 0 0 6px; font-size: 27px; line-height: 31px; text-indent: 4px; white-space: nowrap; }
.note strong { color: #00f; }
```
